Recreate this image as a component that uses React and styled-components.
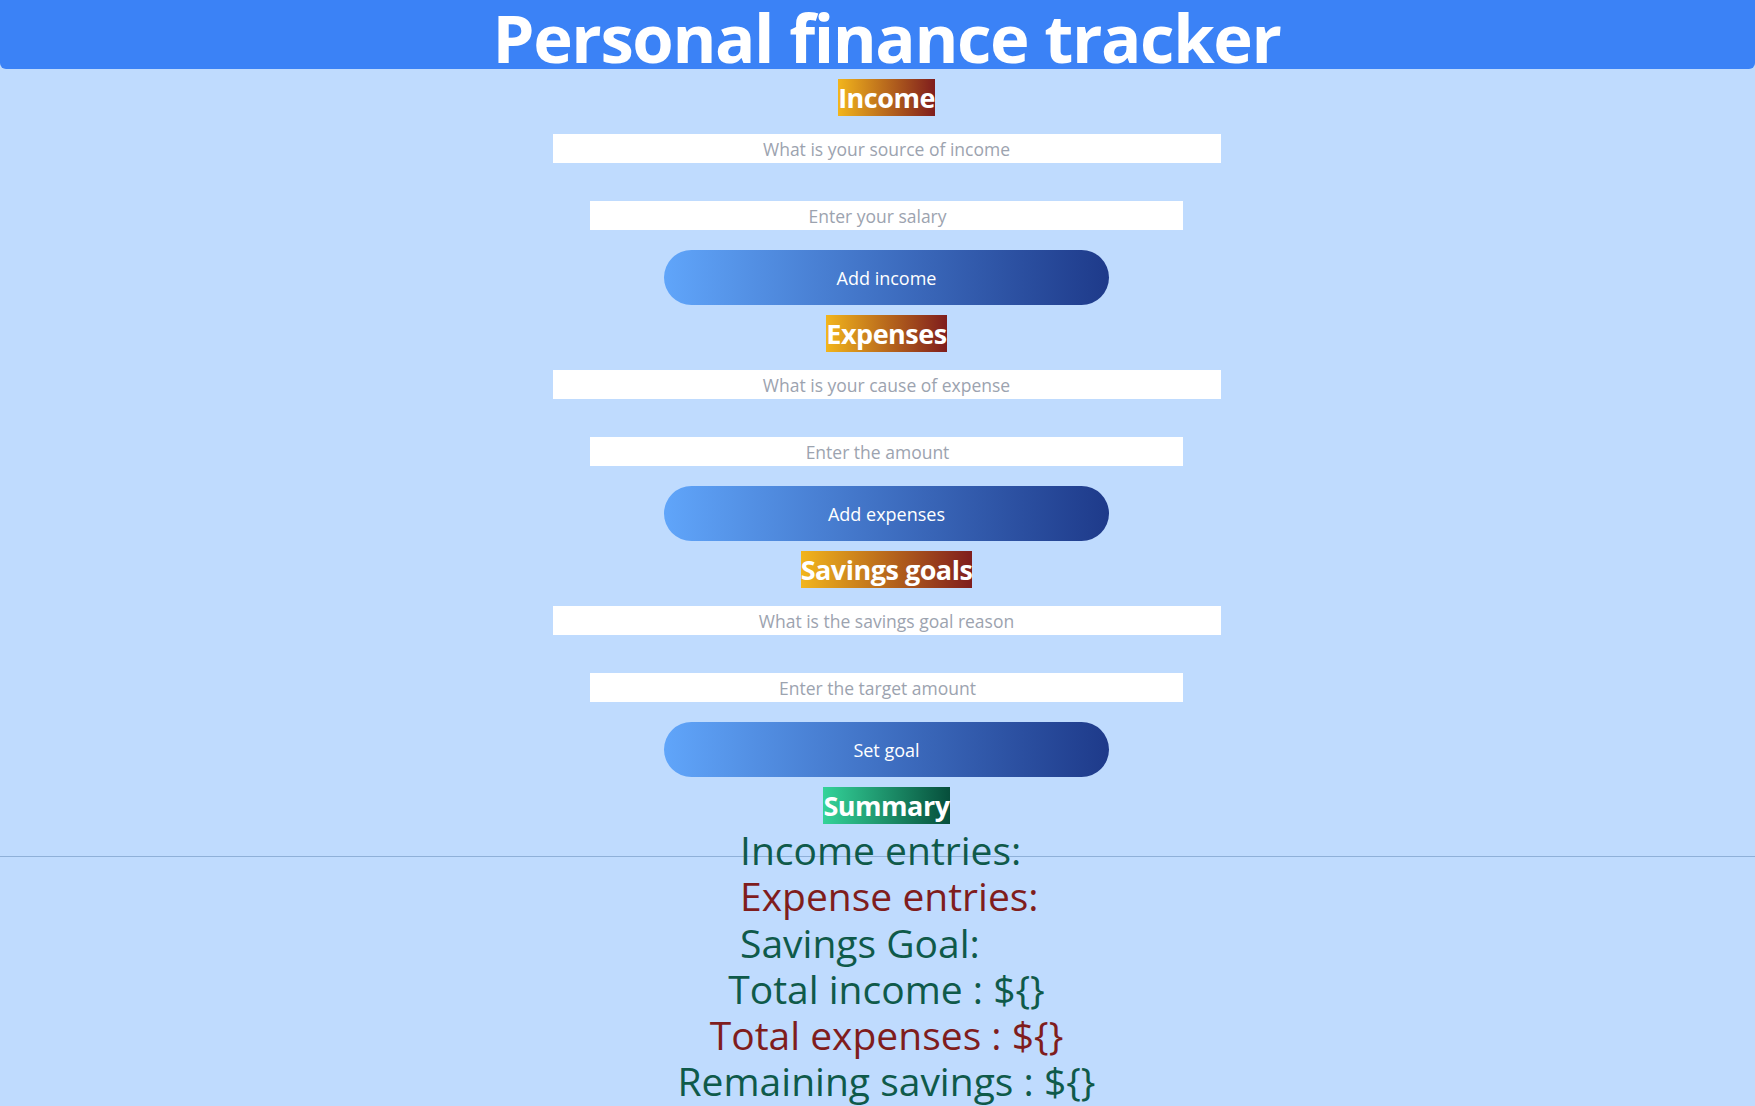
import React from "react";
import styled, { createGlobalStyle } from "styled-components";

const GlobalStyle = createGlobalStyle`
  html {
    background: linear-gradient(
        to bottom,
        transparent 856px,
        #8fb0d8 856px,
        #8fb0d8 857px,
        transparent 857px
      ),
      #bfdbfe;
    min-height: 100%;
  }
  body {
    margin: 0;
    padding: 0;
    font-family: "Open Sans", "Noto Sans", sans-serif;
  }
`;

const Header = styled.header`
  box-sizing: border-box;
  height: 69px;
  background: #3b82f6;
  border-radius: 0 0 6px 6px;
  display: flex;
  align-items: flex-start;
  justify-content: center;
  padding: 6px 0 0 18px;
`;

const Title = styled.h1`
  margin: 0;
  color: #fff;
  font-size: 67px;
  font-weight: 700;
  letter-spacing: -1.4px;
  line-height: 63px;
`;

const Main = styled.main`
  padding-left: 18px;
  display: flex;
  flex-direction: column;
  align-items: center;
`;

const Section = styled.section`
  display: flex;
  flex-direction: column;
  align-items: center;
  margin-top: 10px;
`;

const Label = styled.h2`
  margin: 0;
  height: 37px;
  line-height: 37px;
  font-size: 27px;
  font-weight: 700;
  color: #fff;
  letter-spacing: -0.5px;
  background: ${(p) =>
    p.$green
      ? "linear-gradient(to right, #34d399, #064e3b)"
      : "linear-gradient(to right, #f2b51c, #7f1d1d)"};
`;

const Input = styled.input`
  box-sizing: border-box;
  width: ${(p) => (p.$wide ? "668px" : "593px")};
  height: 29px;
  margin-top: ${(p) => (p.$wide ? "18px" : "38px")};
  padding: 0 ${(p) => (p.$wide ? "0" : "18px")} 0 0;
  border: none;
  background: #fff;
  text-align: center;
  font-family: inherit;
  font-size: 17.5px;
  outline: none;
  &::placeholder {
    color: #9ca3af;
  }
`;

const Button = styled.button`
  width: 445px;
  height: 55px;
  margin-top: 20px;
  border: none;
  border-radius: 28px;
  background: linear-gradient(to right, #60a5fa, #1e3a8a);
  color: #fff;
  font-family: inherit;
  font-size: 18px;
`;

const Summary = styled.div`
  display: flex;
  flex-direction: column;
  align-items: center;
  margin-top: 3px;
`;

const Entries = styled.div`
  display: flex;
  flex-direction: column;
  align-items: flex-start;
  width: 285px;
  margin-right: 8px;
`;

const Line = styled.div`
  font-size: 39px;
  line-height: 46.3px;
  color: ${(p) => (p.$red ? "#7f1d1d" : "#0f5a4a")};
  white-space: pre;
`;

const forms = [
  {
    label: "Income",
    first: "What is your source of income",
    second: "Enter your salary",
    action: "Add income",
  },
  {
    label: "Expenses",
    first: "What is your cause of expense",
    second: "Enter the amount",
    action: "Add expenses",
  },
  {
    label: "Savings goals",
    first: "What is the savings goal reason",
    second: "Enter the target amount",
    action: "Set goal",
  },
];

export default function App() {
  return (
    <>
      <GlobalStyle />
      <Header>
        <Title>Personal finance tracker</Title>
      </Header>
      <Main>
        {forms.map((f) => (
          <Section key={f.label}>
            <Label>{f.label}</Label>
            <Input $wide placeholder={f.first} />
            <Input placeholder={f.second} />
            <Button>{f.action}</Button>
          </Section>
        ))}
        <Section>
          <Label $green>Summary</Label>
          <Summary>
            <Entries>
              <Line>Income entries:</Line>
              <Line $red>Expense entries:</Line>
              <Line>Savings Goal:</Line>
            </Entries>
            <Line>Total income : ${"{}"}</Line>
            <Line $red>Total expenses : ${"{}"}</Line>
            <Line>Remaining savings : ${"{}"}</Line>
          </Summary>
        </Section>
      </Main>
    </>
  );
}
